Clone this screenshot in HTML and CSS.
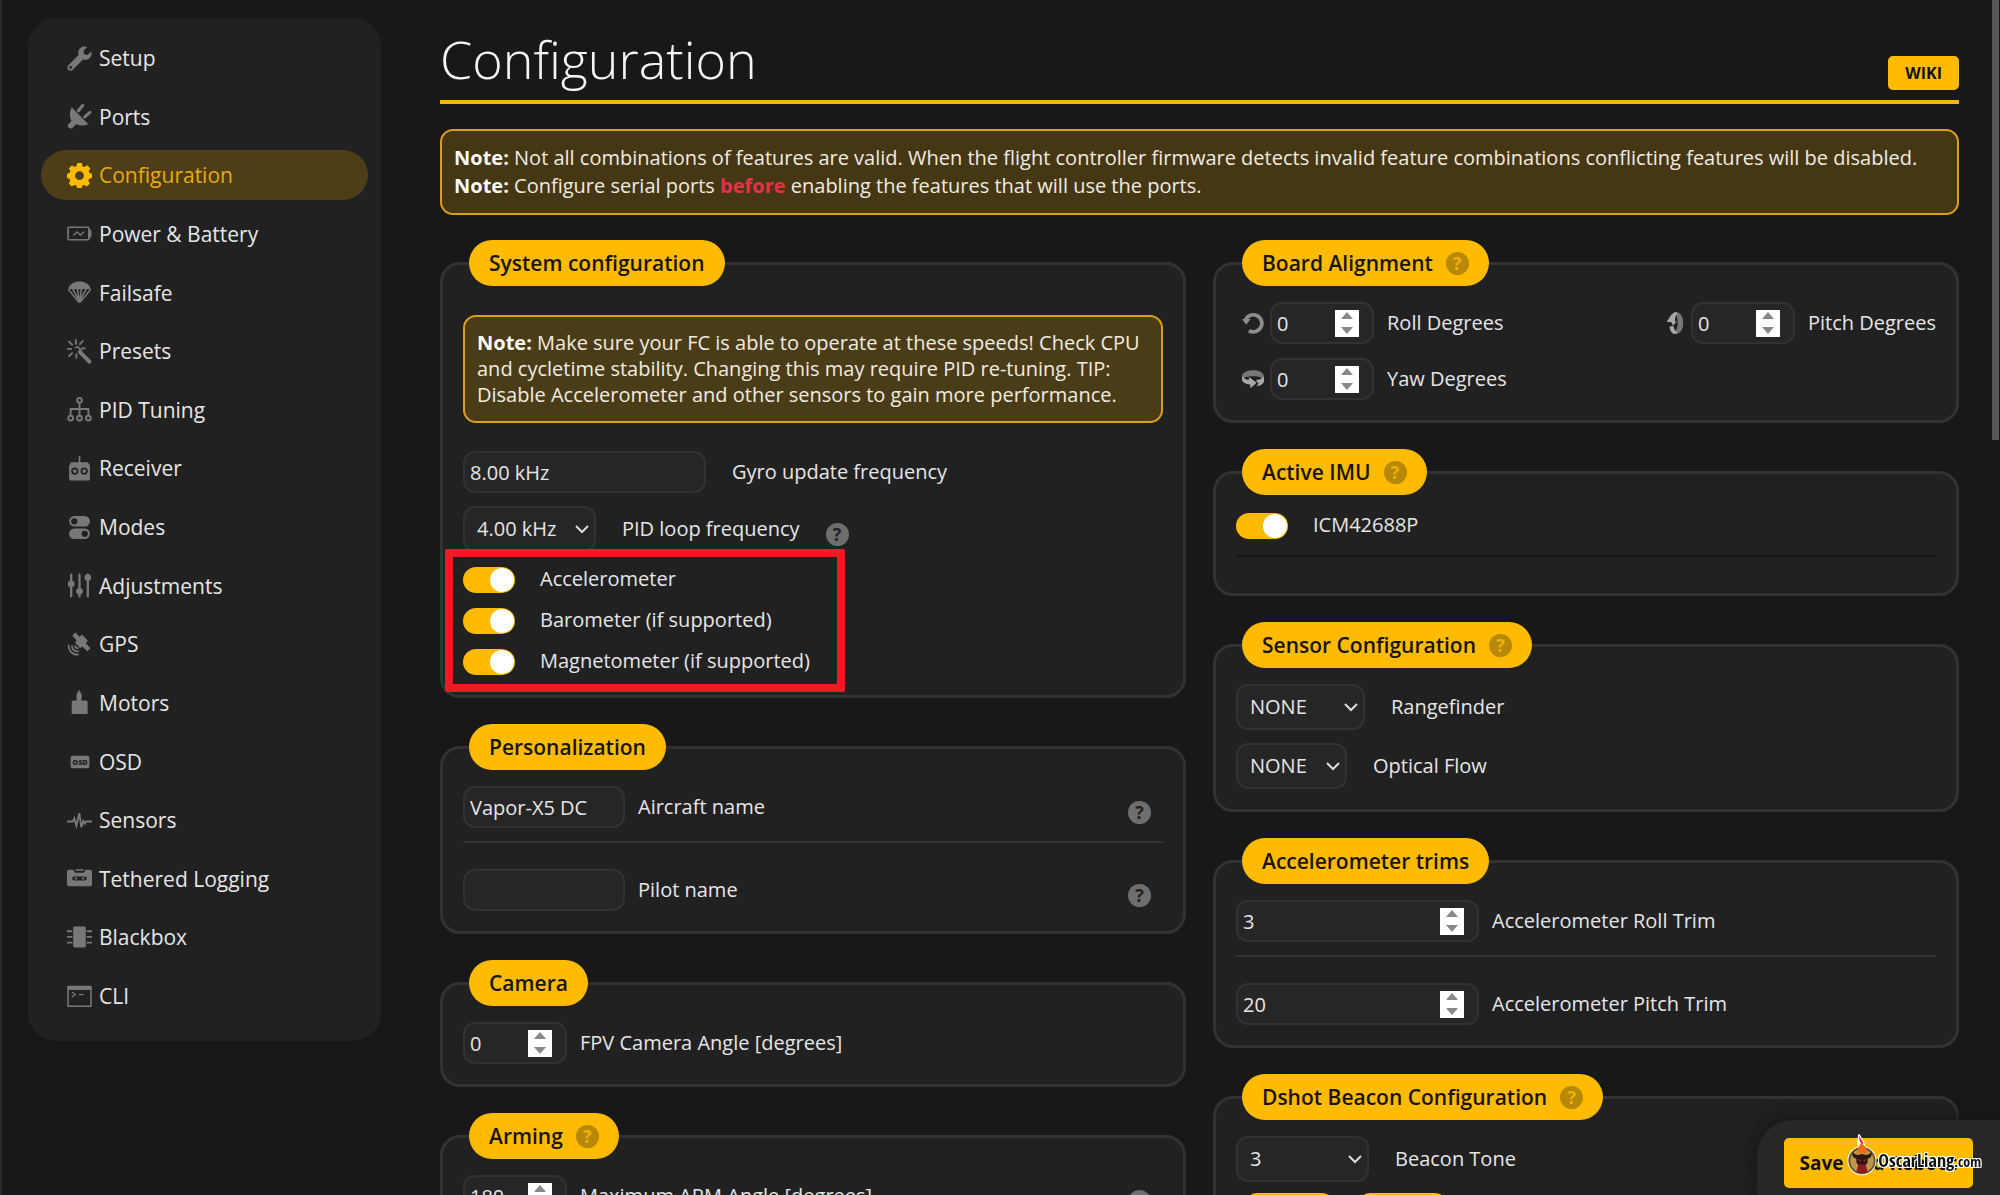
FILE: index.html
```html
<!DOCTYPE html>
<html lang="en">
<head>
<meta charset="utf-8">
<title>Configuration</title>
<link rel="stylesheet" href="styles.css">
</head>
<body>
<aside class="sidebar">
  <nav class="nav">
    <a href="#setup"><svg viewBox="0 0 24 24"><path d="M23.4 5.2 19.6 8.700l-3-.9-.9-3L19.300 1C16.300-.1 12.800.900 11.400 3.900c-.8 1.700-.8 3.300-.3 4.800L1.300 18.400c-1.300 1.300-1.300 3.200-.1 4.400s3.200 1.200 4.500-.1l9.600-9.800c1.700.6 3.700.5 5.400-.5 2.600-1.500 3.600-4.500 2.700-7.200zM3.500 21.900a1.300 1.300 0 1 1 0-2.600 1.300 1.300 0 0 1 0 2.600z"/></svg>Setup</a>
    <a href="#ports"><svg viewBox="0 0 24 24"><path d="M4.500 3 20.500 19.500c-3.500 1.700-8 1.700-11.500-.2L5.500 22.700c-1.200 1.200-2.700 1-3.700.2-1.300-1-1.400-2.600-.3-3.800L4.300 16C2.200 12.500 2.500 7 4.500 3z"/><path class="line" stroke-width="3" d="m11 6.500 4-5M17 12.500l5-4.500"/></svg>Ports</a>
    <a href="#configuration" class="active" aria-current="page"><svg viewBox="0 0 24 24"><path fill-rule="evenodd" d="M9.800 0h4.400l.7 3 1.900.8L19.500 2.200l2.900 3.100-1.600 2.500.8 1.900 2.400.6v4l-2.700.8-.8 1.900 1.500 2.600-2.900 2.900-2.600-1.500-1.700.7-.7 2.300H9.800L9 21.700l-1.700-.7-2.700 1.500-2.900-2.900L3.100 17l-.7-1.900-2.400-.8v-4l2.500-.6.8-1.900L1.800 5.200l2.900-3L7.200 3.800 9.100 3zM12 8a4.200 4.200 0 1 0 0 8.400A4.200 4.200 0 0 0 12 8z"/></svg>Configuration</a>
    <a href="#power"><svg viewBox="0 0 24 24"><path class="line" stroke-width="1.600" d="M2 6h18q1 0 1 1v10q0 1-1 1H2q-1 0-1-1V7q0-1 1-1z"/><path d="M21 7.500q2.500.5 2.500 2.500v4q0 2-2.500 2.500z"/><path class="line" stroke-width="1.400" d="M6.500 13.500 9.500 10.500l3.500 3 3-3"/></svg>Power &amp; Battery</a>
    <a href="#failsafe"><svg viewBox="0 0 24 24"><path d="M1 9.500C2 4 6.500 1.500 12 1.500S22 4 23 9.500c-1.500-1-3.300-1-4.800 0-1.600-1.200-3-1.200-4.300 0-1.200-1-2.600-1-3.800 0-1.300-1.200-2.700-1.200-4.300 0-1.500-1-3.300-1-4.800 0z"/><path class="line" stroke-width="1.500" d="M1.800 9.500 11 21M6 9.500l5.500 10M10.300 9.500 11.500 19M22.200 9.500 13 21M18 9.500l-5.500 10M13.700 9.500 12.500 19"/><path d="M10 19h4l-2 3z"/></svg>Failsafe</a>
    <a href="#presets"><svg viewBox="0 0 24 24"><path class="line" stroke-width="3.800" d="m12.500 12.500 9 9.300"/><path class="line" stroke-width="1.500" d="m8 8.500 2.200-1 3.800 4"/><path class="line" stroke-width="1.800" d="M8.500 1v3.500M2 2.500l2.800 3M15 2l-2.600 3M.5 9.500H4M4.800 13.500 2 16.500M9 14.500V18M14 9h3"/></svg>Presets</a>
    <a href="#pid"><svg viewBox="0 0 24 24"><g class="line" stroke-width="1.800"><circle cx="12" cy="3.200" r="2.300"/><circle cx="3.500" cy="20.300" r="2.300"/><circle cx="12" cy="20.300" r="2.300"/><circle cx="20.500" cy="20.300" r="2.300"/><path d="M12 5.500V18M3.500 18v-6.500h17V18"/></g></svg>PID Tuning</a>
    <a href="#receiver"><svg viewBox="0 0 24 24"><path fill-rule="evenodd" d="M11.200 0h1.600v6H20l2 3v13q0 1.500-1.500 1.500h-17Q2 23.500 2 22V9l2-3h7.200zM7.500 11a3.500 3.500 0 1 0 0 7 3.500 3.500 0 0 0 0-7zm9 0a3.500 3.500 0 1 0 0 7 3.500 3.500 0 0 0 0-7z"/><circle cx="7.500" cy="14.500" r="1.800"/><circle cx="16.500" cy="14.500" r="1.800"/></svg>Receiver</a>
    <a href="#modes"><svg viewBox="0 0 24 24"><path fill-rule="evenodd" d="M7 1h10a5 5 0 0 1 0 10H7A5 5 0 0 1 7 1zm0 2a3 3 0 1 0 0 6 3 3 0 0 0 0-6zM7 13h10a5 5 0 0 1 0 10H7a5 5 0 0 1 0-10zm10 2a3 3 0 1 0 0 6 3 3 0 0 0 0-6z"/></svg>Modes</a>
    <a href="#adjustments"><svg viewBox="0 0 24 24"><path class="line" stroke-width="2.200" d="M4 1.500v21M12 1.500v21M20 1.500v21"/><circle cx="4" cy="10.500" r="3.200"/><circle cx="12" cy="17.500" r="3.200"/><circle cx="20" cy="4.500" r="3.200"/></svg>Adjustments</a>
    <a href="#gps"><svg viewBox="0 0 24 24"><path d="m5 3.500 3-3L12 4.500l2.500-2 5.500 6-2 2.300 4.500 4.700-3 3-4.800-4.500-2 1.500-5-5.500 1.500-2z"/><path class="line" stroke-width="1.700" d="M1.500 13c0 5 3.500 8.800 9 8.800M4.800 13.500c.2 3 2.200 5 5.700 5.200M8 13.500c0 1.500 1 2 2.500 2"/></svg>GPS</a>
    <a href="#motors"><svg viewBox="0 0 24 24"><path d="M11.500 0q4 5 2.300 8.500V10H18q1.800 0 1.800 1.800V23H4.500V11.800Q4.500 10 6.300 10h3V8.500Q8 5 11.500 0z"/></svg>Motors</a>
    <a href="#osd"><svg viewBox="0 0 24 24"><rect x="3.500" y="6.500" width="18" height="12" rx="2"/><text class="osd-text" x="12.500" y="15" text-anchor="middle">OSD</text></svg>OSD</a>
    <a href="#sensors"><svg viewBox="0 0 24 24"><path class="line" stroke-width="1.800" d="M0 13h5.500l1.500-3 2 7L11.800 5l2 13.500 1.900-6 1.500 2.500 1-2H24"/></svg>Sensors</a>
    <a href="#logging"><svg viewBox="0 0 24 24"><path fill-rule="evenodd" d="M2 3.500h4l2 3h8l2-3h4q2 0 2 2v12q0 2-2 2H2q-2 0-2-2v-12q0-2 2-2zM7 10a2 2 0 1 0 0 4h10a2 2 0 1 0 0-4zM8 3h8v1.500H8z"/><path d="M7.500 11h2v2h-2zM14.500 11h2v2h-2z"/></svg>Tethered Logging</a>
    <a href="#blackbox"><svg viewBox="0 0 24 24"><rect x="6" y="1.500" width="12" height="20" rx="1"/><path class="line" stroke-width="1.700" d="M.5 6h4M.5 11.500h4M.5 17h4M19.500 6h4M19.500 11.500h4M19.500 17h4"/></svg>Blackbox</a>
    <a href="#cli"><svg viewBox="0 0 24 24"><path class="line" stroke-width="1.500" d="M1 2.500h22v18.800H1z"/><path d="M1 2.500h22v3.200H1z"/><path class="line" stroke-width="1.200" d="m5 8 3 2.200L5 12.300M12 10.300h3.500"/></svg>CLI</a>
  </nav>
</aside>

<main class="content">
  <header class="page-header">
    <h1>Configuration</h1>
    <button type="button" class="wiki">WIKI</button>
  </header>
  <div class="note note-page">
    <p><strong>Note:</strong> Not all combinations of features are valid. When the flight controller firmware detects invalid feature combinations conflicting features will be disabled.</p>
    <p><strong>Note:</strong> Configure serial ports <strong class="danger">before</strong> enabling the features that will use the ports.</p>
  </div>

  <div class="columns">
    <div class="column">
      <fieldset class="card">
        <legend>System configuration</legend>
        <div class="note note-card"><p><strong>Note:</strong> Make sure your FC is able to operate at these speeds! Check CPU and cycletime stability. Changing this may require PID re-tuning. TIP: Disable Accelerometer and other sensors to gain more performance.</p></div>
        <div class="row wide"><input id="gyro" class="long" type="text" value="8.00 kHz" readonly><label for="gyro">Gyro update frequency</label></div>
        <div class="row wide next"><select id="pid-loop" class="w-pid"><option>4.00 kHz</option></select><label for="pid-loop">PID loop frequency</label><span class="help">?</span></div>
        <div class="toggles">
          <div class="toggle-row"><input type="checkbox" id="acc" checked><label for="acc">Accelerometer</label></div>
          <div class="toggle-row"><input type="checkbox" id="baro" checked><label for="baro">Barometer (if supported)</label></div>
          <div class="toggle-row"><input type="checkbox" id="mag" checked><label for="mag">Magnetometer (if supported)</label></div>
          <div class="highlight"></div>
        </div>
      </fieldset>

      <fieldset class="card">
        <legend>Personalization</legend>
        <div class="row"><input id="craft" class="name" type="text" value="Vapor-X5 DC"><label for="craft">Aircraft name</label><span class="help end">?</span></div>
        <hr>
        <div class="row"><input id="pilot" class="name" type="text"><label for="pilot">Pilot name</label><span class="help end">?</span></div>
      </fieldset>

      <fieldset class="card">
        <legend>Camera</legend>
        <div class="row"><input id="fpv" class="short" type="number" value="0"><label for="fpv">FPV Camera Angle [degrees]</label></div>
      </fieldset>

      <fieldset class="card">
        <legend>Arming <span class="help">?</span></legend>
        <div class="row"><input id="arm" class="short" type="number" value="180"><label for="arm">Maximum ARM Angle [degrees]</label><span class="help end">?</span></div>
      </fieldset>
    </div>

    <div class="column">
      <fieldset class="card">
        <legend>Board Alignment <span class="help">?</span></legend>
        <div class="align-grid">
          <div class="row"><svg class="axis" viewBox="0 0 24 24"><path fill="none" stroke="#8c8c8c" stroke-width="4" d="M3.500 9.500a9.300 9.300 0 1 1 4 10.800"/><path fill="#8c8c8c" d="M0 7.500h9.500L4.500 14z"/></svg><input id="roll" class="short" type="number" value="0"><label for="roll">Roll Degrees</label></div>
          <div class="row"><svg class="axis" viewBox="0 0 24 24"><path fill="#777" d="M13 0c6 0 9 5 9 12s-3 12-9 12l-4-1c5-1 7-5 7-11S14 2 13 0z"/><path fill="#a8a8a8" d="M4 11 9 3l4-3 3 1c-2 2-3 5-3 9h2l-4 5-2-4zM7 16l4-1 2 5 3 3-3 1q-5-1-6-8z"/></svg><input id="pitch" class="short" type="number" value="0"><label for="pitch">Pitch Degrees</label></div>
          <div class="row"><svg class="axis" viewBox="0 0 24 24"><path fill="#777" d="M0 10C0 5 5 2.500 12 2.500S24 5 24 10l-1 3c-1-3-5-4-11-4S2 10 1 13z"/><path fill="#a8a8a8" d="M0 9q2 3 7 4l1-3 8 6-7 6v-4q-8-1-9-5zM15 13q6 0 9-4v6q-2 4-8 5l2-3z"/></svg><input id="yaw" class="short" type="number" value="0"><label for="yaw">Yaw Degrees</label></div>
        </div>
      </fieldset>

      <fieldset class="card">
        <legend>Active IMU <span class="help">?</span></legend>
        <div class="toggle-row imu"><input type="checkbox" id="imu" checked><label for="imu">ICM42688P</label></div>
        <hr class="dark">
      </fieldset>

      <fieldset class="card">
        <legend>Sensor Configuration <span class="help">?</span></legend>
        <div class="row wide"><select id="range" class="w-range"><option>NONE</option></select><label for="range">Rangefinder</label></div>
        <div class="row wide next"><select id="flow" class="w-flow"><option>NONE</option></select><label for="flow">Optical Flow</label></div>
      </fieldset>

      <fieldset class="card">
        <legend>Accelerometer trims</legend>
        <div class="row"><input id="rtrim" class="long" type="number" value="3"><label for="rtrim">Accelerometer Roll Trim</label></div>
        <hr>
        <div class="row"><input id="ptrim" class="long" type="number" value="20"><label for="ptrim">Accelerometer Pitch Trim</label></div>
      </fieldset>

      <fieldset class="card">
        <legend>Dshot Beacon Configuration <span class="help">?</span></legend>
        <div class="row wide"><select id="tone" class="w-pid"><option>3</option></select><label for="tone">Beacon Tone</label></div>
        <div class="chips"><span></span><span></span></div>
      </fieldset>
    </div>
  </div>
</main>

<div class="scroll-thumb"></div>

<footer class="toolbar">
  <button type="button" class="save">Save and Reboot</button>
  <div class="watermark">
    <svg viewBox="0 0 32 44"><path fill="#fff" stroke="#fff" stroke-width="2" d="M13 0c0 4 6 6 5 13h-5c-2-5-1-8 0-13z"/><path fill="#e8323c" d="M13 1c1 4 5 6 4 10l-3-3c-1-2-1-5-1-7z"/><circle cx="16" cy="28" r="15.500" fill="#fff"/><circle cx="16" cy="28" r="14.500" fill="#6b5426"/><circle cx="16" cy="28" r="12.500" fill="#c0964a"/><path fill="#f26a1b" d="M15 9c4 3 7 6 5 11h-8c-1-4 0-6 3-11z"/><path fill="#2a1712" d="M6 18c1 3 4 4 6 4l4-1 4 1c2 0 5-1 6-4 1 4 0 7-4 8v4l-3 4h-6l-3-4v-4c-4-1-5-4-4-8z"/><path fill="#8d1c20" d="M12 32h8l2 8q-6 3-12 0z"/><path fill="#d3202c" d="m12 26 3 2-2 1zM20 26l-3 2 2 1z"/></svg>
    <span>OscarLiang<small>.com</small></span>
  </div>
</footer>
</body>
</html>
```
FILE: styles.css
```css
:root {
  --bg: #181818;
  --surface: #212121;
  --field: #262626;
  --line: #323232;
  --amber: #ffbb00;
  --text: #e6e6e6;
}

* {
  box-sizing: border-box;
}

html {
  height: 100%;
}

body {
  display: flex;
  align-items: flex-start;
  height: 100%;
  margin: 0;
  overflow: hidden;
  background: var(--bg);
  color: var(--text);
  font: 20px/26px "Open Sans", sans-serif;
  box-shadow: inset 2px 0 #2b2b2b;
}

p, h1 {
  margin: 0;
}

/* Sidebar */
.sidebar {
  flex: 0 0 353px;
  margin: 18px 0 0 28px;
  padding: 15px 13px 20px;
  border-radius: 28px;
  background: var(--surface);
}

.nav {
  display: flex;
  flex-direction: column;
  justify-content: space-between;
  min-height: 988px;
}

.nav a {
  display: flex;
  align-items: center;
  gap: 7px;
  height: 50px;
  padding: 0 26px;
  border-radius: 25px;
  color: var(--text);
  font-size: 21px;
  text-decoration: none;
}

.nav svg {
  width: 25px;
  height: 25px;
  fill: #787878;
  stroke: none;
}

.nav .line {
  fill: none;
  stroke: #787878;
  stroke-linecap: round;
}

.nav .osd-text {
  fill: var(--surface);
  font-size: 7px;
  font-weight: 800;
}

.nav a.active {
  background: #4d3e18;
  color: #eba90c;
}

.nav a.active svg {
  fill: var(--amber);
}

/* Page */
.content {
  flex: 1;
  min-width: 0;
  padding: 0 41px 0 59px;
}

.page-header {
  display: flex;
  align-items: flex-end;
  justify-content: space-between;
  padding-top: 23px;
  border-bottom: 4px solid #f5b50a;
}

h1 {
  margin-bottom: 5px;
  font-size: 52px;
  font-weight: 300;
  line-height: 72px;
  color: #f5f5f5;
}

button {
  border: 0;
  border-radius: 5px;
  background: var(--amber);
  color: #111;
  font-family: inherit;
  font-weight: 700;
}

.wiki {
  height: 34px;
  margin-bottom: 10px;
  padding: 0 17px;
  font-size: 16px;
}

.note {
  border: 2px solid #d9a11b;
  border-radius: 13px;
  background: #4a3c17;
  color: #f0ece2;
  padding: 13px 12px;
}

.note strong {
  color: #fff;
}

.note .danger {
  color: #e8304a;
}

.note-page {
  margin-top: 25px;
  background: #453713;
  line-height: 28px;
}

.note-card {
  margin: 13px 0 28px;
}

.columns {
  display: grid;
  grid-template-columns: 1fr 1fr;
  align-items: start;
  gap: 27px;
  margin-top: 25px;
}

.column {
  display: flex;
  flex-direction: column;
  gap: 26px;
  min-width: 0;
}

/* Cards */
.card {
  min-width: 0;
  margin: 0;
  padding: 16px 20px 20px;
  border: 3px solid var(--line);
  border-radius: 20px;
  background: var(--surface);
}

legend {
  display: flex;
  align-items: center;
  gap: 13px;
  height: 46px;
  margin-left: 6px;
  padding: 0 20px;
  border-radius: 23px;
  background: var(--amber);
  color: #1a1405;
  font-size: 21px;
  font-weight: 600;
}

.row {
  display: flex;
  align-items: center;
  gap: 13px;
}

.row.wide {
  gap: 26px;
}

.row.next {
  margin-top: 13px;
}

hr {
  height: 2px;
  margin: 13px 0 26px;
  border: 0;
  background: var(--line);
}

hr.dark {
  margin: 16px 0;
  background: #161616;
}

.help {
  display: inline-flex;
  flex: none;
  align-items: center;
  justify-content: center;
  width: 23px;
  height: 23px;
  border-radius: 50%;
  background: #6e6e6e;
  color: var(--surface);
  font-size: 18px;
  font-weight: 700;
  line-height: 23px;
}

.row .help {
  margin-top: 10px;
}

.help.end {
  margin-right: 12px;
  margin-left: auto;
}

legend .help {
  background: #b88808;
  color: #eeb00a;
}

/* Fields */
input, select {
  flex: none;
  margin: 0;
  border: 2px solid var(--line);
  border-radius: 12px;
  background-color: var(--field);
  color: var(--text);
  font: inherit;
}

input {
  height: 42px;
  padding: 0 13px 0 5px;
}

.long {
  width: 243px;
}

.name {
  width: 162px;
}

.short {
  width: 104px;
}

input::-webkit-inner-spin-button {
  width: 24px;
  height: 27px;
  margin: 0;
  opacity: 1;
  appearance: none;
  -webkit-appearance: none;
  background: #fff url("data:image/svg+xml,%3Csvg xmlns='http://www.w3.org/2000/svg' viewBox='0 0 24 27'%3E%3Cpath fill='%23888' d='M6 9l6-7 6 7zM6 17h12l-6 7z'/%3E%3C/svg%3E") center / 24px 27px no-repeat;
}

select {
  height: 46px;
  padding: 0 30px 0 12px;
  appearance: none;
  background-image: url("data:image/svg+xml,%3Csvg xmlns='http://www.w3.org/2000/svg' viewBox='0 0 14 9'%3E%3Cpath fill='none' stroke='%23ddd' stroke-width='2' d='M1 1l6 6 6-6'/%3E%3C/svg%3E");
  background-repeat: no-repeat;
  background-position: right 5px center;
  background-size: 14px 9px;
}

.w-pid {
  width: 133px;
}

.w-range {
  width: 129px;
}

.w-flow {
  width: 111px;
}

/* Switches */
.toggles {
  position: relative;
  display: grid;
  gap: 15px;
  margin-top: 15px;
}

.toggle-row {
  display: flex;
  align-items: center;
  gap: 25px;
  height: 26px;
}

.toggle-row label {
  padding-bottom: 2px;
}

.toggle-row.imu {
  margin-top: 2px;
}

input[type="checkbox"] {
  display: flex;
  justify-content: flex-end;
  width: 52px;
  height: 26px;
  padding: 1px;
  border: 0;
  border-radius: 13px;
  appearance: none;
  background: var(--amber);
}

input[type="checkbox"]::before {
  content: "";
  width: 24px;
  height: 24px;
  border-radius: 50%;
  background: #fff;
}

input[type="checkbox"]:not(:checked) {
  justify-content: flex-start;
  background: #555;
}

.highlight {
  position: absolute;
  top: -18px;
  left: -18px;
  width: 400px;
  height: 143px;
  border: 8px solid #ed1c24;
  border-radius: 2px;
  pointer-events: none;
}

.align-grid {
  display: grid;
  grid-template-columns: auto auto;
  justify-content: space-between;
  gap: 14px;
  padding-left: 6px;
}

.axis {
  flex: none;
  width: 22px;
  height: 22px;
  margin-right: -7px;
}

.chips {
  display: flex;
  gap: 24px;
  margin: 11px 0 0 9px;
}

.chips span {
  width: 89px;
  height: 40px;
  border-radius: 12px;
  background: var(--amber);
}

/* Overlays */
.scroll-thumb {
  position: fixed;
  top: 0;
  right: 1px;
  width: 7px;
  height: 440px;
  background: #585858;
}

.toolbar {
  position: fixed;
  right: 0;
  bottom: 0;
  padding: 18px 27px 7px;
  border-top-left-radius: 36px;
  background: #272727;
  box-shadow: 0 0 20px #141414;
}

.save {
  height: 50px;
  padding: 0 16px;
  font-size: 19px;
}

.watermark {
  position: absolute;
  right: 19px;
  bottom: 19px;
  display: flex;
  align-items: flex-end;
  gap: 1px;
  color: #111;
  font: 700 18px/28px "Open Sans Condensed", "Roboto Condensed", sans-serif;
  text-shadow: 1px 1px #fff, -1px -1px #fff, 1px -1px #fff, -1px 1px #fff;
}

.watermark svg {
  width: 30px;
  height: 42px;
}

.watermark small {
  font-size: 14px;
}
```
